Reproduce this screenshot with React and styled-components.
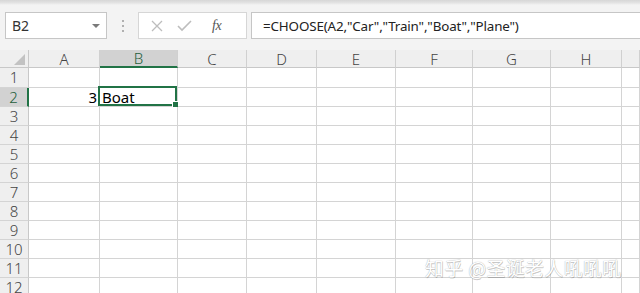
import React from 'react'
import styled, { createGlobalStyle } from 'styled-components'

const GlobalStyle = createGlobalStyle`
  html, body {
    margin: 0;
    padding: 0;
    background: #ffffff;
    overflow: hidden;
  }
  body {
    font-family: "Noto Sans", "Liberation Sans", sans-serif;
  }
`

const GREEN = '#217346'
const GRID = '#d4d4d4'

const Sheet = styled.div`
  position: relative;
  width: 640px;
  height: 293px;
  overflow: hidden;
  background: #ffffff;
`

const Toolbar = styled.div`
  height: 50px;
  box-sizing: border-box;
  padding: 12px 0 0 5px;
  display: flex;
  align-items: flex-start;
  background: linear-gradient(#d6d6d6 0, #e4e4e4 3px, #f3f3f3 5px, #f3f3f3 100%);
`

const NameBox = styled.div`
  width: 102px;
  height: 27px;
  box-sizing: border-box;
  border: 1px solid #c6c6c6;
  background: #ffffff;
  display: flex;
  align-items: center;
  justify-content: space-between;
  padding: 0 6px 0 6px;
  font-size: 14px;
  color: #333333;
`

const Caret = styled.span`
  width: 0;
  height: 0;
  border-left: 4px solid transparent;
  border-right: 4px solid transparent;
  border-top: 4px solid #7a7a7a;
`

const Grip = styled.div`
  width: 31px;
  height: 27px;
  display: flex;
  flex-direction: column;
  align-items: center;
  justify-content: center;
  gap: 3px;
  span {
    width: 2px;
    height: 2px;
    background: #b0b0b0;
  }
`

const ActionBox = styled.div`
  width: 109px;
  height: 27px;
  box-sizing: border-box;
  border: 1px solid #d6d6d6;
  background: #ffffff;
  display: flex;
  align-items: center;
  padding-left: 12px;
  gap: 14px;
`

const Fx = styled.span`
  font-family: "Liberation Serif", "DejaVu Serif", serif;
  font-style: italic;
  font-size: 14px;
  color: #555555;
  margin-left: 6px;
  letter-spacing: -0.5px;
`

const FormulaBox = styled.div`
  flex: 1;
  margin-left: 4px;
  height: 27px;
  box-sizing: border-box;
  border: 1px solid #c6c6c6;
  border-right: none;
  background: #ffffff;
  display: flex;
  align-items: center;
  padding-left: 11px;
  font-size: 13.4px;
  color: #222222;
  white-space: nowrap;
  letter-spacing: -0.15px;
`

const Grid = styled.div`
  display: grid;
  grid-template-columns: 29px 71px 78px 69px 70px 79px 77px 78px 71px 1fr;
  grid-template-rows: 18px 20px repeat(11, 19px);
`

const Cell = styled.div`
  position: relative;
  box-sizing: border-box;
  border-right: 1px solid ${GRID};
  border-bottom: 1px solid ${GRID};
  font-size: 15px;
  color: #000000;
  display: flex;
  align-items: center;
  justify-content: ${p => (p.$right ? 'flex-end' : 'flex-start')};
  padding: 0 2px 0 2px;
  line-height: 1;
`

const ColHead = styled.div`
  box-sizing: border-box;
  background: ${p => (p.$active ? '#d2d2d2' : '#efefef')};
  border-right: 1px solid ${p => (p.$corner ? '#c8c8c8' : '#d0d0d0')};
  border-bottom: ${p => (p.$active ? `2px solid ${GREEN}` : '1px solid #c8c8c8')};
  display: flex;
  align-items: center;
  justify-content: center;
  font-size: 15px;
  font-weight: 300;
  color: ${p => (p.$active ? '#1f5f3c' : '#444444')};
  position: relative;
`

const Corner = styled.span`
  position: absolute;
  right: 3px;
  bottom: 2px;
  width: 0;
  height: 0;
  border-left: 11px solid transparent;
  border-bottom: 11px solid #c2c2c2;
`

const RowHead = styled.div`
  box-sizing: border-box;
  background: ${p => (p.$active ? '#d2d2d2' : '#efefef')};
  border-right: ${p => (p.$active ? `2px solid ${GREEN}` : '1px solid #c8c8c8')};
  border-bottom: 1px solid ${GRID};
  display: flex;
  align-items: center;
  justify-content: center;
  font-size: 15px;
  line-height: 1;
  font-weight: 300;
  color: ${p => (p.$active ? '#1f5f3c' : '#444444')};
`

const Selection = styled.div`
  position: absolute;
  left: -2px;
  top: -2px;
  right: 0;
  bottom: 0;
  border: 2px solid ${GREEN};
  pointer-events: none;
`

const Handle = styled.span`
  position: absolute;
  right: -4px;
  bottom: -4px;
  width: 5px;
  height: 5px;
  background: ${GREEN};
  border: 1px solid #ffffff;
`

const Watermark = styled.div`
  position: absolute;
  left: 425px;
  top: 254px;
  font-family: "Noto Sans CJK SC", sans-serif;
  font-size: 19px;
  color: #ffffff;
  letter-spacing: 0.3px;
  text-shadow: 0 0 1px #9a9a9a, 0.5px 0.5px 0.5px rgba(0, 0, 0, 0.2);
  white-space: nowrap;
`

const columns = ['A', 'B', 'C', 'D', 'E', 'F', 'G', 'H', '']
const rows = Array.from({ length: 12 }, (_, i) => i + 1)

const App = () => {
  const cellContent = (row, col) => {
    if (row === 2 && col === 'A') return <Cell key={col} $right>3</Cell>
    if (row === 2 && col === 'B') {
      return (
        <Cell key={col}>
          Boat
          <Selection><Handle /></Selection>
        </Cell>
      )
    }
    return <Cell key={col || 'last'} />
  }

  return (
    <Sheet>
      <GlobalStyle />
      <Toolbar>
        <NameBox>
          B2
          <Caret />
        </NameBox>
        <Grip><span /><span /><span /></Grip>
        <ActionBox>
          <svg width="12" height="12" viewBox="0 0 12 12">
            <path d="M1 1 L11 11 M11 1 L1 11" stroke="#bdbdbd" strokeWidth="1.3" />
          </svg>
          <svg width="15" height="12" viewBox="0 0 15 12">
            <path d="M1 6 L5 10 L14 1" stroke="#bdbdbd" strokeWidth="1.6" fill="none" />
          </svg>
          <Fx>fx</Fx>
        </ActionBox>
        <FormulaBox>=CHOOSE(A2,"Car","Train","Boat","Plane")</FormulaBox>
      </Toolbar>
      <Grid>
        <ColHead $corner><Corner /></ColHead>
        {columns.map((c, i) => (
          <ColHead key={i} $active={c === 'B'}>{c}</ColHead>
        ))}
        {rows.map(r => (
          <React.Fragment key={r}>
            <RowHead $active={r === 2}>{r}</RowHead>
            {columns.map(c => cellContent(r, c))}
          </React.Fragment>
        ))}
      </Grid>
      <Watermark>知乎 @圣诞老人吼吼吼</Watermark>
    </Sheet>
  )
}

export default App
